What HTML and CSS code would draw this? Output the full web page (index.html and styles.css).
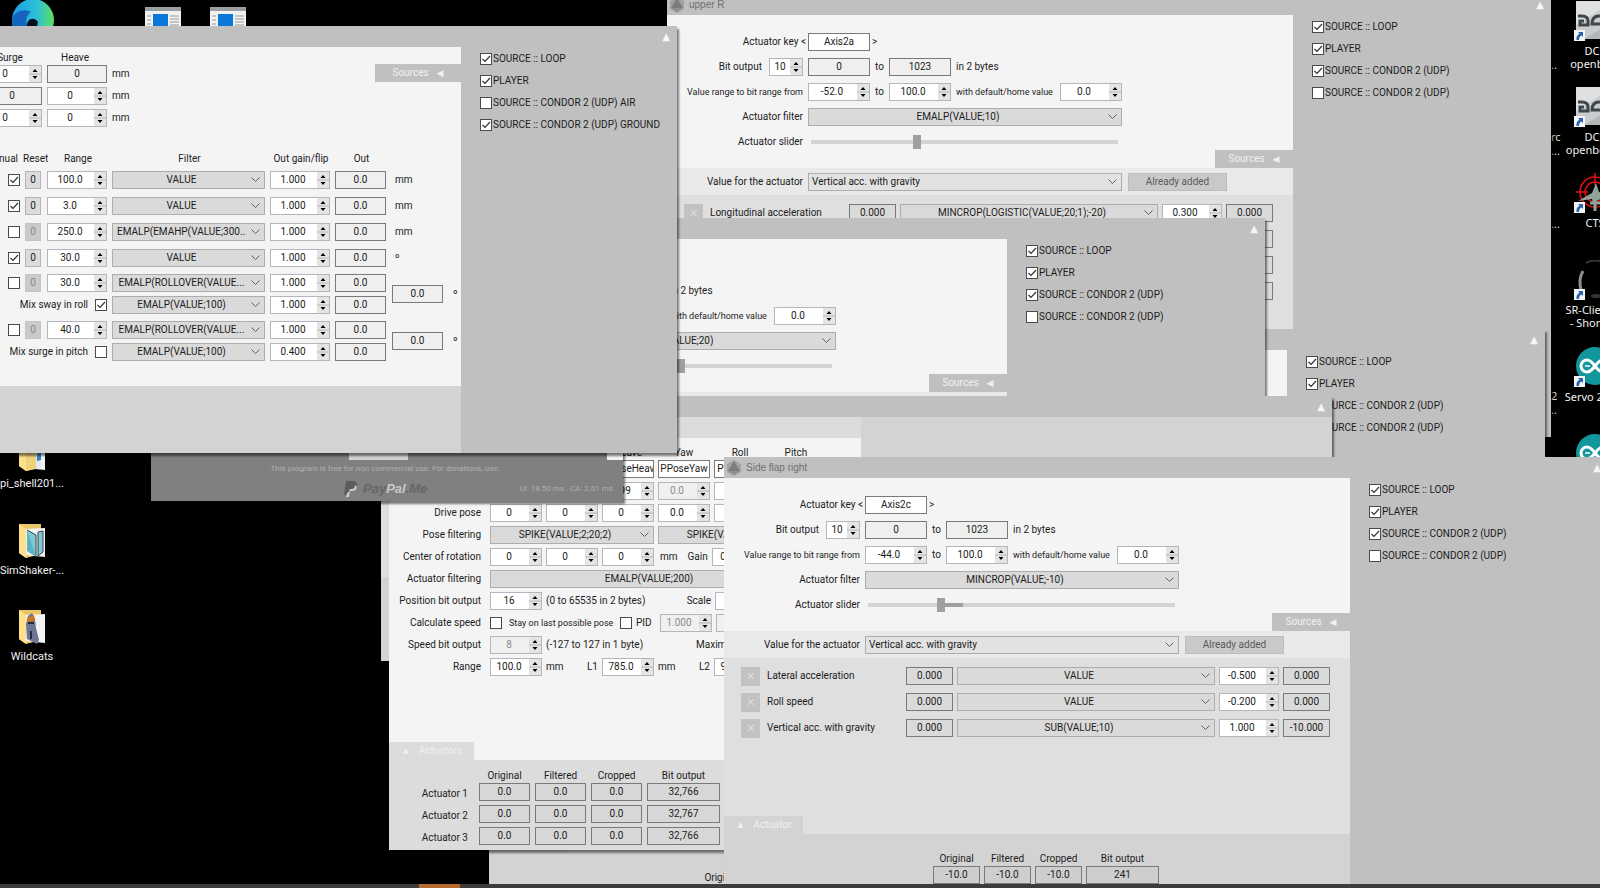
FILE: index.html
```
<!DOCTYPE html>
<html lang="en">
<head>
<meta charset="utf-8">
<title>Motion rig desktop</title>
<link rel="stylesheet" href="styles.css">
</head>
<body>
<svg class="defs" aria-hidden="true">
  <symbol id="logo" viewBox="0 0 14 16"><path d="M7 0l7 4v8l-7 4-7-4V4z" fill="#a2a2a2"/><path d="M7 1l6 10H1z" fill="#7c7c7c"/><path d="M1 11h12l-6 4z" fill="#909090"/></symbol>
  <symbol id="folder" viewBox="0 0 27 36"><path d="M0 1h22v30L7 35 0 30z" fill="#e9c766"/><path d="M6 6l20-1v29l-20-2z" fill="#f3f3f3"/></symbol>
  <symbol id="folder-front" viewBox="0 0 27 36"><path d="M0 1l7 5v29l-7-5z" fill="#ffe08c"/></symbol>
  <symbol id="shortcut" viewBox="0 0 11 11"><path d="M0 0h11v11H0z" fill="#f4f4f4"/><path d="M4 2h5v5L7.500 5.500C5.500 6.500 5 8 5 10H2.500C2 7 3.500 5 5.500 3.600z" fill="#2a63ad"/></symbol>
  <symbol id="dcs" viewBox="0 0 38 38"><path d="M0 0h38v38H0z" fill="#c9cccd"/><path d="M0 0h38L0 24z" fill="#dfe1e1"/><path d="M38 20v18H8z" fill="#b4b7b9"/><path d="M2 15h4q6 0 6 5v4H4v-4h4M26 15h-3q-7 0-7 8h10" fill="none" stroke="#3f474c" stroke-width="3"/></symbol>
  <symbol id="arduino" viewBox="0 0 38 38"><circle cx="19" cy="19" r="19" fill="#12979c"/><path d="M19 19c-3-4-5-6-8-6a6 6 0 0 0 0 12c3 0 5-2 8-6s5-6 8-6a6 6 0 0 1 0 12c-3 0-5-2-8-6z" fill="none" stroke="#fff" stroke-width="3"/><path d="M9 19h5M25 19h5M27.500 16.500v5" stroke="#fff" stroke-width="1.500"/></symbol>
  <symbol id="app" viewBox="0 0 36 36"><path d="M0 0h36v36H0z" fill="#f1f1f1"/><path d="M0 0h36v4H0z" fill="#9a9fa4"/><path d="M8 7h15v29H8z" fill="#0a78d8"/><path d="M2 9h4M2 13h4M2 17h4M2 21h4M2 25h4M25 9h9M25 12h9M25 15h9M25 18h9M25 21h9M25 24h9" stroke="#999"/></symbol>
</svg>

<main class="desktop">
  <!-- Desktop icons -->
  <svg class="icon edge" viewBox="0 0 42 42"><defs><linearGradient id="eg" x1="0" x2="1"><stop offset="0" stop-color="#1a9fe6"/><stop offset=".6" stop-color="#2cc0d8"/><stop offset="1" stop-color="#5fe05a"/></linearGradient></defs><circle cx="21" cy="21" r="21" fill="url(#eg)"/><path d="M0 22C1 12 12 9 19 13c-5 3-6 9-3 14s9 8 15 6c-8 10-24 10-29-1-2-4-2-7-2-10z" fill="#1565c0"/><path d="M15 29c-1-8 5-11 9-8 4 2 0 6 1 9 1 2 6 3 10 3h-9c-7 0-11-1-11-4z" fill="#02101c"/></svg>
  <svg class="icon app1"><use href="#app"/></svg>
  <svg class="icon app2"><use href="#app"/></svg>
  <div class="shortcut left s1"><svg viewBox="0 0 27 36"><use href="#folder"/><path d="M6 6l11-1v28l-10 2z" fill="#f0d27c"/><path d="M17 12l5-1v20l-5 2z" fill="#dfe9f2"/><path d="M18 17l4-1v8l-4 1z" fill="#3b83c0"/><use href="#folder-front"/></svg><span>pi_shell201...</span></div>
  <div class="shortcut left s2"><svg viewBox="0 0 27 36"><use href="#folder"/><path d="M8 7l9 5v22l-9-6z" fill="#58b5c2"/><path d="M8 7l9 5v22M19 9l5-1v21l-5 4z" fill="#7fc9d4" stroke="#3c4448"/><use href="#folder-front"/></svg><span>SimShaker-...</span></div>
  <div class="shortcut left s3"><svg viewBox="0 0 27 36"><use href="#folder"/><path d="M9 7l4-3 3 6 1 9 3 12-2 4-10-5-1-15z" fill="#6c7796"/><path d="M8 9l7-3 1 6-8 1z" fill="#c9781f"/><path d="M9 14h6M12 22v8" stroke="#25293a" stroke-width="2"/><use href="#folder-front"/></svg><span>Wildcats</span></div>
  <div class="shortcut right r1"><svg><use href="#dcs"/></svg><svg class="badge"><use href="#shortcut"/></svg><span>DCS<br>openbeta</span></div>
  <div class="shortcut right r2"><svg><use href="#dcs"/></svg><svg class="badge"><use href="#shortcut"/></svg><span>DCS<br>openbeta S</span></div>
  <div class="shortcut right r3"><svg viewBox="0 0 38 38"><g fill="none" stroke="#e01010" stroke-width="1.500"><circle cx="19" cy="19" r="15"/><circle cx="19" cy="19" r="10"/><path d="M19 0v12M0 19h12M38 19H26"/></g><path d="M2 28l14-8 4-10 3 9 14 5-15 3-5 4-1-5z" fill="#8fa39a"/><path d="M14 30h10M19 30v8" stroke="#8fa39a" stroke-width="3"/></svg><svg class="badge"><use href="#shortcut"/></svg><span>CTS</span></div>
  <div class="shortcut right r4"><svg viewBox="0 0 38 38"><path d="M5 30c-2-8-1-14 2-19" fill="none" stroke="#8d8d8d" stroke-width="3"/><path d="M10 3q9-5 18 0" fill="none" stroke="#333" stroke-width="2"/><ellipse cx="20" cy="36" rx="5" ry="2" fill="#333"/></svg><svg class="badge"><use href="#shortcut"/></svg><span>SR-ClientRa<br>- Shortcut</span></div>
  <div class="shortcut right r5"><svg><use href="#arduino"/></svg><svg class="badge"><use href="#shortcut"/></svg><span>Servo 2021-</span></div>
  <div class="shortcut right r6"><svg><use href="#arduino"/></svg></div>
  <span class="frag f1">..</span><span class="frag f2">rc<br>...</span><span class="frag f3">...</span><span class="frag f4">2<br>..</span>

  <!-- Actuator window, bottom of the stack -->
  <section class="window w-low">
    <header class="title"></header>
    <div class="frame"><div class="body">
      <div class="form"></div><div class="pick"></div>
      <div class="values"><div class="tab bottom-tab"></div></div>
      <div class="result"><table><tr><th>Original</th><th>Filtered</th></tr></table></div>
    </div></div>
  </section>

  <!-- upper R -->
  <section class="window w-upper">
    <header class="title"><svg><use href="#logo"/></svg><h2>upper R</h2><button class="up" aria-label="Collapse">▲</button></header>
    <div class="frame">
      <div class="body">
        <div class="form">
          <div class="row"><label class="lead key" for="u1">Actuator key &lt;</label><input class="box w62" id="u1" value="Axis2a"><span class="gt">&gt;</span></div>
          <div class="row"><label class="lead bit">Bit output <input class="spin w34" value="10"></label><output class="cell w62">0</output><span class="to">to</span><output class="cell w62">1023</output><span>in 2 bytes</span></div>
          <div class="row"><label class="lead small" for="u2">Value range to bit range from</label><input class="spin w62" id="u2" value="-52.0"><span class="to">to</span><input class="spin w62" aria-label="Range end" value="100.0"><label class="home small" for="u3">with default/home value</label><input class="spin w62" id="u3" value="0.0"></div>
          <div class="row"><label class="lead" for="u4">Actuator filter</label><select class="combo w314" id="u4"><option>EMALP(VALUE;10)</option></select></div>
          <div class="row"><label class="lead" for="u5">Actuator slider</label><input class="slider" type="range" id="u5" value="34"></div>
          <button class="tab side-tab">Sources<span>◀</span></button>
        </div>
        <div class="pick"><label class="lead" for="u6">Value for the actuator</label><select class="combo w314 start" id="u6"><option>Vertical acc. with gravity</option></select><button class="added" disabled>Already added</button></div>
        <div class="values">
          <div class="vrow"><button class="del" aria-label="Remove">✕</button><span class="name">Longitudinal acceleration</span><output class="cell w47">0.000</output><select class="combo w258" aria-label="Filter"><option>MINCROP(LOGISTIC(VALUE;20;1);-20)</option></select><input class="spin w60" aria-label="Gain" value="0.300"><output class="cell w47">0.000</output></div>
          <div class="vrow end"><output class="cell w47"></output></div>
          <div class="vrow end"><output class="cell w47"></output></div>
          <div class="vrow end"><output class="cell w47"></output></div>
        </div>
        <div class="result"></div>
      </div>
      <div class="sources">
        <label><input type="checkbox" checked>SOURCE :: LOOP</label>
        <label><input type="checkbox" checked>PLAYER</label>
        <label><input type="checkbox" checked>SOURCE :: CONDOR 2 (UDP)</label>
        <label><input type="checkbox">SOURCE :: CONDOR 2 (UDP)</label>
      </div>
    </div>
  </section>

  <!-- Actuator window at the right -->
  <section class="window w-right">
    <header class="title"><button class="up" aria-label="Collapse">▲</button></header>
    <div class="frame">
      <div class="body"><div class="form"></div><div class="pick"></div><div class="values"></div><div class="result"></div></div>
      <div class="sources">
        <label><input type="checkbox" checked>SOURCE :: LOOP</label>
        <label><input type="checkbox" checked>PLAYER</label>
        <label><input type="checkbox" checked>SOURCE :: CONDOR 2 (UDP)</label>
        <label><input type="checkbox">SOURCE :: CONDOR 2 (UDP)</label>
      </div>
    </div>
  </section>

  <!-- Actuator window in the middle -->
  <section class="window w-mid">
    <header class="title"><button class="up" aria-label="Collapse">▲</button></header>
    <div class="frame">
      <div class="body">
        <div class="form">
          <div class="row"></div>
          <div class="row"><span class="lead"></span><output class="cell w62">0</output><span class="to">to</span><output class="cell w62">1023</output><span>in 2 bytes</span></div>
          <div class="row"><span class="lead"></span><input class="spin w62" aria-label="Range start" value="0.0"><span class="to">to</span><input class="spin w62" aria-label="Range end" value="100.0"><label class="home small" for="m3">with default/home value</label><input class="spin w62" id="m3" value="0.0"></div>
          <div class="row"><span class="lead"></span><select class="combo w314" aria-label="Actuator filter"><option>EMALP(VALUE;20)</option></select></div>
          <div class="row"><span class="lead"></span><input class="slider" type="range" aria-label="Actuator slider" value="51"></div>
          <button class="tab side-tab">Sources<span>◀</span></button>
        </div>
        <div class="pick"><span class="lead"></span><select class="combo w314 start" aria-label="Value for the actuator"><option></option></select><button class="added" aria-label="Already added" disabled></button></div>
        <div class="values"><div class="tab bottom-tab"></div></div>
        <div class="result"></div>
      </div>
      <div class="sources">
        <label><input type="checkbox" checked>SOURCE :: LOOP</label>
        <label><input type="checkbox" checked>PLAYER</label>
        <label><input type="checkbox" checked>SOURCE :: CONDOR 2 (UDP)</label>
        <label><input type="checkbox">SOURCE :: CONDOR 2 (UDP)</label>
      </div>
    </div>
  </section>

  <!-- Platform pose window -->
  <section class="window w-pose">
    <header class="title"><button class="up" aria-label="Collapse">▲</button></header>
    <div class="frame">
      <div class="pose-body">
        <div class="strip"></div>
        <div class="pose-form">
          <div class="prow heads"><span class="plead"></span><span></span><span></span><span>Heave</span><span>Yaw</span><span>Roll</span><span>Pitch</span></div>
          <div class="prow"><span class="plead"></span><input class="box w52" aria-label="Surge key" value="PPoseSurge"><input class="box w52" aria-label="Sway key" value="PPoseSway"><input class="box w52" aria-label="Heave key" value="PPoseHeave"><input class="box w52" aria-label="Yaw key" value="PPoseYaw"><input class="box w52" aria-label="Roll key" value="PPoseRoll"></div>
          <div class="prow"><span class="plead"></span><input class="spin w52" aria-label="Surge" value="0"><input class="spin w52" aria-label="Sway" value="0"><input class="spin w52" aria-label="Heave" value="-199"><input class="spin w52" aria-label="Yaw" value="0.0" disabled><input class="spin w52" aria-label="Roll" value=""></div>
          <div class="prow"><label class="plead" for="p1">Drive pose</label><input class="spin w52" id="p1" value="0"><input class="spin w52" aria-label="Drive sway" value="0"><input class="spin w52" aria-label="Drive heave" value="0"><input class="spin w52" aria-label="Drive yaw" value="0.0"><input class="spin w52" aria-label="Drive roll" value=""></div>
          <div class="prow"><label class="plead" for="p2">Pose filtering</label><select class="combo w164" id="p2"><option>SPIKE(VALUE;2;20;2)</option></select><select class="combo w164" aria-label="Angle filtering"><option>SPIKE(VALUE;2;20;2)</option></select></div>
          <div class="prow"><label class="plead" for="p3">Center of rotation</label><input class="spin w52" id="p3" value="0"><input class="spin w52" aria-label="Center sway" value="0"><input class="spin w52" aria-label="Center heave" value="0"><label class="gain" for="p13">mm <span>Gain</span></label><input class="spin w34" id="p13" value="0"></div>
          <div class="prow"><label class="plead" for="p4">Actuator filtering</label><select class="combo w332" id="p4"><option>EMALP(VALUE;200)</option></select></div>
          <div class="prow"><label class="plead" for="p5">Position bit output</label><input class="spin w52" id="p5" value="16"><span class="note">(0 to 65535 in 2 bytes)</span><label class="tail" for="p6">Scale</label><input class="spin w52" id="p6" value="0"></div>
          <div class="prow"><label class="plead" for="p7">Calculate speed</label><input type="checkbox" id="p7"><label class="stay small" for="p8">Stay on last possible pose</label><input type="checkbox" id="p8"><span class="pid">PID</span><input class="spin w52" aria-label="PID" value="1.000" disabled><input class="spin w52" aria-label="PID 2" value="0" disabled></div>
          <div class="prow"><label class="plead" for="p9">Speed bit output</label><input class="spin w52" id="p9" value="8" disabled><span class="note">(-127 to 127 in 1 byte)</span><span class="tail max">Maximum</span></div>
          <div class="prow"><label class="plead" for="p10">Range</label><input class="spin w52" id="p10" value="100.0"><label class="unit-l1" for="p11">mm <span>L1</span></label><input class="spin w52" id="p11" value="785.0"><label class="unit-l1" for="p12">mm <span>L2</span></label><input class="spin w52" id="p12" value="900.0"></div>
          <div class="tab actuators-tab">▲<span>Actuators</span></div>
        </div>
        <div class="actuators">
          <table>
            <tr><td></td><th>Original</th><th>Filtered</th><th>Cropped</th><th>Bit output</th></tr>
            <tr><th scope="row">Actuator 1</th><td><output class="cell">0.0</output></td><td><output class="cell">0.0</output></td><td><output class="cell">0.0</output></td><td><output class="cell wide">32,766</output></td></tr>
            <tr><th scope="row">Actuator 2</th><td><output class="cell">0.0</output></td><td><output class="cell">0.0</output></td><td><output class="cell">0.0</output></td><td><output class="cell wide">32,767</output></td></tr>
            <tr><th scope="row">Actuator 3</th><td><output class="cell">0.0</output></td><td><output class="cell">0.0</output></td><td><output class="cell">0.0</output></td><td><output class="cell wide">32,766</output></td></tr>
          </table>
        </div>
      </div>
    </div>
  </section>

  <!-- Program window -->
  <section class="window w-about">
    <div class="about-top"><i class="chip"></i><i class="chip light"></i></div>
    <p>This program is free for non commercial use. For donations, use:</p>
    <div class="about-foot">
      <a href="#" class="paypal"><svg viewBox="0 0 16 16"><path d="M3 0h7c4 0 5 3 4 5-1 3-3 4-6 4H6l-1 5H1z" fill="#5c5c5c"/><path d="M12 4c3 1 2 6-3 6H7l-1 6H3l1-4 2-1 1-3h2c2 0 3-2 3-4z" fill="#ccc"/></svg><em>Pay<b>Pal</b>.Me</em></a>
      <span class="stats"><span>UI: 18.50 ms</span><span>CA: 2.01 ms</span></span>
    </div>
  </section>

  <!-- Pose correction window -->
  <section class="window w-left">
    <header class="title"><button class="up" aria-label="Collapse">▲</button></header>
    <div class="frame">
      <div class="left-body">
        <div class="left-form">
          <div class="offsets">
            <div class="lrow heads"><span class="w60">Surge</span><span class="w60">Heave</span></div>
            <div class="lrow"><input class="spin w60" aria-label="Surge 1" value="0"><output class="cell w60">0</output><span>mm</span></div>
            <div class="lrow"><output class="cell w60">0</output><input class="spin w60" aria-label="Heave 2" value="0"><span>mm</span></div>
            <div class="lrow"><input class="spin w60" aria-label="Surge 3" value="0"><input class="spin w60" aria-label="Heave 3" value="0"><span>mm</span></div>
            <button class="tab side-tab">Sources<span>◀</span></button>
          </div>
          <div class="axes">
            <div class="lrow heads"><span class="manual">Manual</span><span class="reset-h">Reset</span><span class="w60">Range</span><span class="w153">Filter</span><span class="w60">Out gain/flip</span><span class="w51">Out</span></div>
            <div class="lrow"><span class="ck"><input type="checkbox" aria-label="Manual" checked></span><button class="reset">0</button><input class="spin w60" aria-label="Range" value="100.0"><select class="combo w153" aria-label="Filter"><option>VALUE</option></select><input class="spin w60" aria-label="Gain" value="1.000"><output class="cell w51">0.0</output><span class="unit">mm</span></div>
            <div class="lrow"><span class="ck"><input type="checkbox" aria-label="Manual" checked></span><button class="reset">0</button><input class="spin w60" aria-label="Range" value="3.0"><select class="combo w153" aria-label="Filter"><option>VALUE</option></select><input class="spin w60" aria-label="Gain" value="1.000"><output class="cell w51">0.0</output><span class="unit">mm</span></div>
            <div class="lrow"><span class="ck"><input type="checkbox" aria-label="Manual"></span><button class="reset" disabled>0</button><input class="spin w60" aria-label="Range" value="250.0"><select class="combo w153" aria-label="Filter"><option>EMALP(EMAHP(VALUE;300...</option></select><input class="spin w60" aria-label="Gain" value="1.000"><output class="cell w51">0.0</output><span class="unit">mm</span></div>
            <div class="lrow"><span class="ck"><input type="checkbox" aria-label="Manual" checked></span><button class="reset">0</button><input class="spin w60" aria-label="Range" value="30.0"><select class="combo w153" aria-label="Filter"><option>VALUE</option></select><input class="spin w60" aria-label="Gain" value="1.000"><output class="cell w51">0.0</output><span class="unit">º</span></div>
            <div class="pair">
              <div class="pair-rows">
                <div class="lrow"><span class="ck"><input type="checkbox" aria-label="Manual"></span><button class="reset" disabled>0</button><input class="spin w60" aria-label="Range" value="30.0"><select class="combo w153" aria-label="Filter"><option>EMALP(ROLLOVER(VALUE...</option></select><input class="spin w60" aria-label="Gain" value="1.000"><output class="cell w51">0.0</output></div>
                <div class="lrow"><label class="mix">Mix sway in roll <input type="checkbox" checked></label><select class="combo w153" aria-label="Filter"><option>EMALP(VALUE;100)</option></select><input class="spin w60" aria-label="Gain" value="1.000"><output class="cell w51">0.0</output></div>
              </div>
              <output class="cell w51">0.0</output><span class="unit">º</span>
            </div>
            <div class="pair">
              <div class="pair-rows">
                <div class="lrow"><span class="ck"><input type="checkbox" aria-label="Manual"></span><button class="reset" disabled>0</button><input class="spin w60" aria-label="Range" value="40.0"><select class="combo w153" aria-label="Filter"><option>EMALP(ROLLOVER(VALUE...</option></select><input class="spin w60" aria-label="Gain" value="1.000"><output class="cell w51">0.0</output></div>
                <div class="lrow"><label class="mix">Mix surge in pitch <input type="checkbox"></label><select class="combo w153" aria-label="Filter"><option>EMALP(VALUE;100)</option></select><input class="spin w60" aria-label="Gain" value="0.400"><output class="cell w51">0.0</output></div>
              </div>
              <output class="cell w51">0.0</output><span class="unit">º</span>
            </div>
          </div>
        </div>
        <div class="result"></div>
      </div>
      <div class="sources">
        <label><input type="checkbox" checked>SOURCE :: LOOP</label>
        <label><input type="checkbox" checked>PLAYER</label>
        <label><input type="checkbox">SOURCE :: CONDOR 2 (UDP) AIR</label>
        <label><input type="checkbox" checked>SOURCE :: CONDOR 2 (UDP) GROUND</label>
      </div>
    </div>
  </section>

  <!-- Side flap right -->
  <section class="window w-flap">
    <header class="title"><svg><use href="#logo"/></svg><h2>Side flap right</h2><button class="up" aria-label="Collapse">▲</button></header>
    <div class="frame">
      <div class="body">
        <div class="form">
          <div class="row"><label class="lead key" for="s1">Actuator key &lt;</label><input class="box w62" id="s1" value="Axis2c"><span class="gt">&gt;</span></div>
          <div class="row"><label class="lead bit">Bit output <input class="spin w34" value="10"></label><output class="cell w62">0</output><span class="to">to</span><output class="cell w62">1023</output><span>in 2 bytes</span></div>
          <div class="row"><label class="lead small" for="s2">Value range to bit range from</label><input class="spin w62" id="s2" value="-44.0"><span class="to">to</span><input class="spin w62" aria-label="Range end" value="100.0"><label class="home small" for="s3">with default/home value</label><input class="spin w62" id="s3" value="0.0"></div>
          <div class="row"><label class="lead" for="s4">Actuator filter</label><select class="combo w314" id="s4"><option>MINCROP(VALUE;-10)</option></select></div>
          <div class="row"><label class="lead" for="s5">Actuator slider</label><input class="slider filled" type="range" id="s5" value="23"></div>
          <button class="tab side-tab">Sources<span>◀</span></button>
        </div>
        <div class="pick"><label class="lead" for="s6">Value for the actuator</label><select class="combo w314 start" id="s6"><option>Vertical acc. with gravity</option></select><button class="added" disabled>Already added</button></div>
        <div class="values">
          <div class="vrow"><button class="del" aria-label="Remove">✕</button><span class="name">Lateral acceleration</span><output class="cell w47">0.000</output><select class="combo w258" aria-label="Filter"><option>VALUE</option></select><input class="spin w60" aria-label="Gain" value="-0.500"><output class="cell w47">0.000</output></div>
          <div class="vrow"><button class="del" aria-label="Remove">✕</button><span class="name">Roll speed</span><output class="cell w47">0.000</output><select class="combo w258" aria-label="Filter"><option>VALUE</option></select><input class="spin w60" aria-label="Gain" value="-0.200"><output class="cell w47">0.000</output></div>
          <div class="vrow"><button class="del" aria-label="Remove">✕</button><span class="name">Vertical acc. with gravity</span><output class="cell w47">0.000</output><select class="combo w258" aria-label="Filter"><option>SUB(VALUE;10)</option></select><input class="spin w60" aria-label="Gain" value="1.000"><output class="cell w47">-10.000</output></div>
          <div class="tab bottom-tab">▲<span>Actuator</span></div>
        </div>
        <div class="result"><table>
          <tr><th>Original</th><th>Filtered</th><th>Cropped</th><th>Bit output</th></tr>
          <tr><td><output class="cell w47">-10.0</output></td><td><output class="cell w47">-10.0</output></td><td><output class="cell w47">-10.0</output></td><td><output class="cell wide">241</output></td></tr>
        </table></div>
      </div>
      <div class="sources">
        <label><input type="checkbox" checked>SOURCE :: LOOP</label>
        <label><input type="checkbox" checked>PLAYER</label>
        <label><input type="checkbox" checked>SOURCE :: CONDOR 2 (UDP)</label>
        <label><input type="checkbox">SOURCE :: CONDOR 2 (UDP)</label>
      </div>
    </div>
  </section>

  <footer class="taskbar"><i></i></footer>
</main>
</body>
</html>
```
FILE: styles.css
```
* { box-sizing: border-box; }
body { margin: 0; background: #000; }
.defs { position: absolute; width: 0; height: 0; }
.desktop {
  position: relative; height: 100vh; overflow: hidden; background: #000; color: #1c1c1c;
  font: 10px/14px Roboto, "Liberation Sans", sans-serif;
  white-space: nowrap;
}
input, select, button, output { font: inherit; color: inherit; margin: 0; }
button { border: 0; padding: 0; background: none; }

/* Desktop icons */
.icon { position: absolute; }
.edge { left: 12px; top: -1px; width: 42px; height: 42px; }
.app1, .app2 { width: 36px; height: 36px; top: 7px; left: 145px; }
.app2 { left: 210px; }
.shortcut { position: absolute; font: 11px/13px "Noto Sans", sans-serif; color: #f2f2f2; display: flex; flex-direction: column; }
.left { left: 0; width: 64px; align-items: center; gap: 5px; font: 11px/13px Roboto, sans-serif; }
.left svg { width: 27px; height: 36px; }
.s1 { top: 436px; }
.s2 { top: 523px; }
.s3 { top: 609px; }
.right { left: 1555px; width: 80px; align-items: center; text-align: center; gap: 5px; }
.right svg { width: 38px; height: 38px; }
.right .badge { position: absolute; left: 19px; top: 29px; width: 11px; height: 11px; }
.r1 { top: 1px; }
.r2 { top: 87px; }
.r3 { top: 173px; }
.r4 { top: 260px; }
.r5 { top: 347px; }
.r6 { top: 434px; }
.frag { position: absolute; left: 1551px; font: 11px/14px "Noto Sans", sans-serif; color: #ddd; }
.f1 { top: 58px; }
.f2 { top: 130px; }
.f3 { top: 217px; }
.f4 { top: 389px; }

/* Windows */
.window { position: absolute; width: 884px; background: #c0c0c0; box-shadow: 2px 3px 2px rgba(0, 0, 0, .5); }
.w-low { left: 489px; top: 476px; }
.w-upper { left: 667px; top: -6px; }
.w-right { left: 661px; top: 329px; }
.w-mid { left: 381px; top: 218px; }
.w-pose { left: 389px; top: 396px; width: 943px; }
.w-about { left: 151px; top: 440px; width: 472px; background: #808080; }
.w-left { left: -60px; top: 26px; width: 737px; }
.w-flap { left: 724px; top: 457px; }

.title { height: 21px; display: flex; align-items: center; padding: 0 7px 0 3px; gap: 5px; color: #707070; }
.title svg { width: 14px; height: 16px; }
.title h2 { margin: 0; font: 10px/14px "Liberation Sans", sans-serif; }
.up { margin-left: auto; color: #f6f6f6; font: 10px/12px "DejaVu Sans", sans-serif; }
.frame { display: flex; }
.body { width: 626px; flex: none; }
.sources { flex: 1; padding: 5px 0 0 19px; display: flex; flex-direction: column; gap: 8px; }
.sources label { display: flex; align-items: center; gap: 1px; height: 14px; }
.small { font-size: 9px; }

/* Actuator form */
.form { height: 153px; background: #f4f4f4; padding-top: 18px; display: flex; flex-direction: column; gap: 7px; }
.row { display: flex; align-items: center; gap: 5px; height: 18px; flex: none; }
.lead { width: 136px; flex: none; text-align: right; }
.key { width: 139px; margin-right: -3px; }
.gt { margin-left: -3px; }
.bit { display: flex; justify-content: flex-end; align-items: center; gap: 7px; }
.to { width: 9px; }
.home { width: 99px; }
.tab { background: #c0c0c0; color: #f0f0f0; height: 18px; width: 78px; display: flex; align-items: center; justify-content: center; gap: 8px; flex: none; }
.side-tab { align-self: flex-end; margin-top: -8px; }
.side-tab span { font: 9px/12px "DejaVu Sans", sans-serif; }
.pick { height: 27px; background: #e9e9e9; display: flex; align-items: center; gap: 5px; }
.added { width: 99px; height: 18px; background: #c9c9c9; border: 1px solid #bdbdbd; color: #5a5a5a; margin-left: 1px; }
.values { height: 176px; background: #dfdfdf; padding: 9px 20px 0 17px; display: flex; flex-direction: column; gap: 8px; }
.vrow { display: flex; align-items: center; gap: 4px; height: 18px; flex: none; }
.vrow.end { justify-content: flex-end; }
.del { width: 19px; height: 19px; background: #c2c2c2; color: #dedede; font: 11px/19px "DejaVu Sans", sans-serif; }
.name { flex: 1; padding-left: 3px; }
.bottom-tab { margin: auto 0 0 -17px; width: 79px; background: #d3d3d3; }
.result { height: 66px; background: #d3d3d3; padding: 14px 0 0 207px; }

/* Controls */
.box, .spin, .cell { height: 18px; padding: 0; text-align: center; border: 1px solid #7a7a7a; flex: none; border-radius: 0; }
.box { background: #fff; padding-bottom: 1px; }
.cell { display: block; line-height: 16px; background: rgba(0, 0, 0, .02); }
.spin {
  border-color: #b4b6bb; padding: 0 14px 2px 0;
  background: #fff url("data:image/svg+xml,%3Csvg xmlns='http://www.w3.org/2000/svg' width='12' height='16'%3E%3Cpath d='M0 0h12v7.500H0zM0 8.500h12V16H0z' fill='%23e4e4e4'/%3E%3Cpath d='M0 8h12' stroke='%23aaa'/%3E%3Cpath d='M6 3l2.500 3h-5zM6 13l2.500-3h-5z'/%3E%3C/svg%3E") right center no-repeat;
}
.spin:disabled { color: #8c8c8c; background-color: #f0f0f0; }
.combo { appearance: none; height: 18px; padding: 0 18px 0 4px; border: 1px solid #adadad; border-radius: 0; text-align: center; text-align-last: center;
  background: #dadada url("data:image/svg+xml,%3Csvg xmlns='http://www.w3.org/2000/svg' width='9' height='6'%3E%3Cpath d='M.5 .5l4 4 4-4' fill='none' stroke='%23606060'/%3E%3C/svg%3E") right 4px center no-repeat; flex: none; }
.combo.start { padding-left: 3px; text-align: left; text-align-last: left; background-color: #e2e2e2; }
input[type=checkbox] { appearance: none; width: 12px; height: 12px; border: 1px solid #4a4a4a; background: #fff; flex: none; }
input[type=checkbox]:checked { background: #fff url("data:image/svg+xml,%3Csvg xmlns='http://www.w3.org/2000/svg' width='10' height='10'%3E%3Cpath d='M1.500 5l2.500 2.500 5-5.500' fill='none' stroke='%23333' stroke-width='1.200'/%3E%3C/svg%3E") center no-repeat; }
.slider { appearance: none; width: 307px; height: 14px; margin-left: 3px; background: linear-gradient(#d3d3d3, #d3d3d3) center / 100% 4px no-repeat; }
.slider.filled { background-image: linear-gradient(90deg, #d3d3d3 23%, #a0a0a0 23%, #a0a0a0 31%, #d3d3d3 31%); }
.slider::-webkit-slider-thumb { appearance: none; width: 8px; height: 14px; background: #a0a0a0; }
.w34 { width: 34px; }
.w47 { width: 47px; }
.w51 { width: 51px; }
.w52 { width: 52px; }
.w60 { width: 60px; }
.w62 { width: 62px; }
.w153 { width: 153px; }
.w164 { width: 164px; }
.w258 { width: 258px; }
.w314 { width: 314px; }
.w332 { width: 332px; }
.spin.w34 { padding-right: 12px; }

table { border-spacing: 0; border-collapse: collapse; }
th { font-weight: normal; padding: 0; }
td { padding: 0; }
.result th { height: 18px; min-width: 51px; padding: 4px 2px 0; line-height: 14px; }
.result td { padding: 0 2px; }
.wide { width: 73px; }

/* Pose window */
.w-pose .frame { background: #d3d3d3; }
.pose-body { width: 472px; background: #f4f4f4; }
.strip { height: 21px; background: #dcdcdc; }
.pose-form { height: 322px; display: flex; flex-direction: column; gap: 4px; padding-top: 8px; overflow: hidden; }
.prow { display: flex; align-items: center; gap: 4px; height: 18px; flex: none; }
.heads.prow { height: 14px; margin-bottom: -4px; }
.heads span { text-align: center; }
.prow.heads span + span { width: 52px; flex: none; }
.plead { width: 92px; margin-right: 5px; text-align: right; flex: none; }
.gain { display: flex; gap: 10px; width: 50px; padding-left: 2px; }
.note { width: 108px; }
.tail { width: 53px; text-align: right; }
.max { text-align: left; padding-left: 38px; }
.stay { width: 110px; padding-left: 3px; }
.pid { width: 20px; }
.unit-l1 { display: flex; justify-content: space-between; width: 52px; }
.actuators-tab { width: 85px; background: #dcdcdc; margin-top: auto; }
.actuators { background: #dcdcdc; height: 90px; padding: 9px 0 0 0; }
.actuators table { border-collapse: separate; }
.actuators th { height: 14px; }
.actuators th[scope] { width: 79px; text-align: right; padding-right: 0; }
.actuators td { padding: 0 0 4px 5px; }
.actuators th + th, .actuators td + th { padding-left: 5px; }
.actuators th[scope] + td { padding-left: 11px; }
.actuators td + th:nth-child(2) { padding-left: 11px; }
.actuators .cell { width: 51px; }
.actuators .wide { width: 73px; }

/* Program window */
.about-top { height: 20px; display: flex; justify-content: space-between; padding-left: 198px; }
.chip { width: 59px; background: #d3d3d3; }
.chip.light { width: 16px; background: #f4f4f4; }
.w-about p { margin: 2px 0 0; text-align: center; color: #b0b0b0; font-size: 8px; line-height: 14px; padding-right: 4px; }
.about-foot { display: flex; justify-content: space-between; align-items: center; height: 25px; padding: 0 10px 0 192px; color: #b0b0b0; font-size: 8px; }
.paypal { display: flex; align-items: center; gap: 4px; color: #666; text-decoration: none; font: bold 13px/16px "Liberation Sans", sans-serif; }
.paypal svg { width: 16px; height: 16px; }
.paypal b { color: #c8c8c8; }
.stats { display: flex; gap: 6px; }

/* Pose correction window */
.left-body { width: 521px; flex: none; }
.left-form { height: 339px; background: #f4f4f4; padding-top: 4px; }
.w-left .result { height: 67px; }
.lrow { display: flex; align-items: center; gap: 5px; height: 18px; }
.lrow.heads { height: 14px; }
.offsets { position: relative; padding-left: 42px; display: flex; flex-direction: column; gap: 4px; }
.offsets .heads { margin-bottom: -4px; }
.offsets .side-tab { position: absolute; right: 0; top: 21px; width: 86px; }
.lrow.heads .w60, .lrow.heads .w153, .lrow.heads .w51 { text-align: center; }
.offsets .heads .w60 { padding-right: 4px; }
.axes { margin-top: 25px; display: flex; flex-direction: column; gap: 8px; }
.axes .heads { margin-bottom: -3px; }
.manual { width: 78px; }
.reset-h { width: 24px; margin-right: -4px; }
.heads .manual { text-align: right; }
.ck { width: 80px; display: flex; justify-content: flex-end; }
.reset { width: 16px; height: 18px; background: #dcdcdc; border: 1px solid #b5b5b5; flex: none; margin-right: 1px; }
.reset:disabled { background: #cacaca; color: #888; border-color: #c4c4c4; }
.pair { display: flex; align-items: center; gap: 6px; margin-top: -1px; }
.pair-rows { display: flex; flex-direction: column; gap: 4px; }
.mix { width: 167px; display: flex; align-items: center; justify-content: flex-end; gap: 7px; }
.unit { padding-left: 4px; }

.taskbar { position: absolute; left: 0; right: 0; bottom: 0; height: 4px; background: #3b3d3d; }
.taskbar i { display: block; width: 41px; height: 4px; margin-left: 419px; background: #b8692c; }
```
